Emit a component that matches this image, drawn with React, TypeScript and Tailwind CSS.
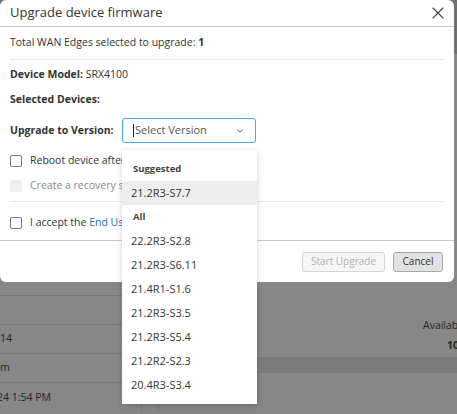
import { ChevronDown, X } from 'lucide-react';

const suggested = ['21.2R3-S7.7'];
const allVersions = [
  '22.2R3-S2.8',
  '21.2R3-S6.11',
  '21.4R1-S1.6',
  '21.2R3-S3.5',
  '21.2R3-S5.4',
  '21.2R2-S2.3',
  '20.4R3-S3.4',
];

function Checkbox({ disabled }: { disabled?: boolean }) {
  return (
    <span
      className={
        disabled
          ? 'h-[12px] w-[12px] shrink-0 rounded-[2px] bg-[#eeeeee]'
          : 'h-[12px] w-[12px] shrink-0 rounded-[2px] border border-[#777777] bg-white'
      }
    />
  );
}

function VersionMenu() {
  return (
    <div className="absolute left-0 top-[32px] z-20 w-[135px] bg-white py-[7px] shadow-[0_2px_6px_rgba(0,0,0,0.18)]">
      <div className="flex h-[24px] items-center px-[11px] text-[9.5px] font-bold text-[#444]">Suggested</div>
      {suggested.map((v) => (
        <div key={v} className="flex h-[24px] items-center bg-[#eeeef0] px-[9px] text-[11px] text-[#333]">
          {v}
        </div>
      ))}
      <div className="flex h-[24px] items-center px-[11px] text-[9.5px] font-bold text-[#444]">All</div>
      {allVersions.map((v) => (
        <div key={v} className="flex h-[24px] items-center px-[9px] text-[11px] text-[#333]">
          {v}
        </div>
      ))}
    </div>
  );
}

function FirmwareModal() {
  return (
    <div className="absolute left-0 top-0 z-10 w-[454px] rounded-[6px] bg-white text-[10.5px] text-[#333]">
      <div className="flex h-[27px] items-center justify-between border-b border-[#c8c8c8] pl-[10px] pr-[6px]">
        <h2 className="text-[13px] text-[#333]">Upgrade device firmware</h2>
        <X className="h-[20px] w-[20px] text-[#444]" strokeWidth={1.3} />
      </div>

      <div className="px-[10px]">
        <div className="flex h-[32px] items-center">
          Total WAN Edges selected to upgrade:&nbsp;<b>1</b>
        </div>
        <div className="border-t border-[#e8e8e8]" />
        <div className="flex h-[30px] items-center">
          <b>Device Model:</b>&nbsp;SRX4100
        </div>
        <div className="flex h-[20px] items-center font-bold">Selected Devices:</div>
        <div className="flex h-[41px] items-center">
          <span className="w-[112px] font-bold">Upgrade to Version:</span>
          <div className="relative">
            <div className="flex h-[25px] w-[134px] items-center justify-between rounded-[3px] border border-[#4aa6e6] pl-[10px] pr-[10px]">
              <span className="flex items-center text-[11px] text-[#555]">
                <span className="mr-[1px] h-[13px] w-px bg-[#222]" />
                Select Version
              </span>
              <ChevronDown className="h-[10px] w-[10px] text-[#555]" strokeWidth={2.2} />
            </div>
            <VersionMenu />
          </div>
        </div>
        <div className="flex h-[20px] items-center gap-[8px]">
          <Checkbox />
          <span>Reboot device after upgrade</span>
        </div>
        <div className="flex h-[30px] items-center gap-[8px] text-[#888]">
          <Checkbox disabled />
          <span>Create a recovery snapshot</span>
        </div>
        <div className="border-t border-[#e8e8e8]" />
        <div className="flex h-[38px] items-center gap-[8px] pt-[3px]">
          <Checkbox />
          <span>
            I accept the <span className="text-[#1b6ec2]">End User License Agreement</span>
          </span>
        </div>
      </div>

      <div className="flex h-[42px] items-center justify-end gap-[8px] border-t border-[#c8c8c8] pr-[11px]">
        <button className="h-[20px] w-[83px] rounded-[3px] border border-[#d6d6d6] bg-[#f6f6f6] text-[10px] text-[#b3b3b3]">
          Start Upgrade
        </button>
        <button className="h-[20px] w-[50px] rounded-[3px] border border-[#a8a8a8] bg-[#e2e2e2] text-[10px] text-[#333]">
          Cancel
        </button>
      </div>
    </div>
  );
}

export default function App() {
  return (
    <div
      className="relative h-[414px] w-[457px] overflow-hidden bg-[#878787] text-[10.5px] text-[#262626]"
      style={{ fontFamily: '"Open Sans", "Noto Sans", sans-serif' }}
    >
      {/* dimmed page behind the dialog */}
      <div className="h-[54px] bg-[#6f6f6f]" />
      <div className="flex">
        <div className="w-[142px] shrink-0 border-r border-[#7a7a7a] pt-[213px]">
          <div className="h-[29px] border-b border-[#777]" />
          <div className="h-[29px] border-b border-[#777]" />
          <div className="flex h-[29px] items-center border-b border-[#777]">14</div>
          <div className="flex h-[29px] items-center border-b border-[#777]">m</div>
          <div className="-ml-[3px] flex h-[29px] items-center whitespace-nowrap">24 1:54 PM</div>
        </div>
        <div className="ml-[16px] flex-1 border-l border-[#7a7a7a]">
          <div className="flex justify-end pt-[262px]">
            <div className="w-[34px] whitespace-nowrap">
              <div className="flex h-[20px] items-center">Available</div>
              <div className="flex h-[20px] items-center pl-[24px] font-bold">100</div>
            </div>
          </div>
          <div className="mt-[1px] h-[16px] bg-[#7b7b7b]" />
        </div>
      </div>

      <FirmwareModal />
    </div>
  );
}
